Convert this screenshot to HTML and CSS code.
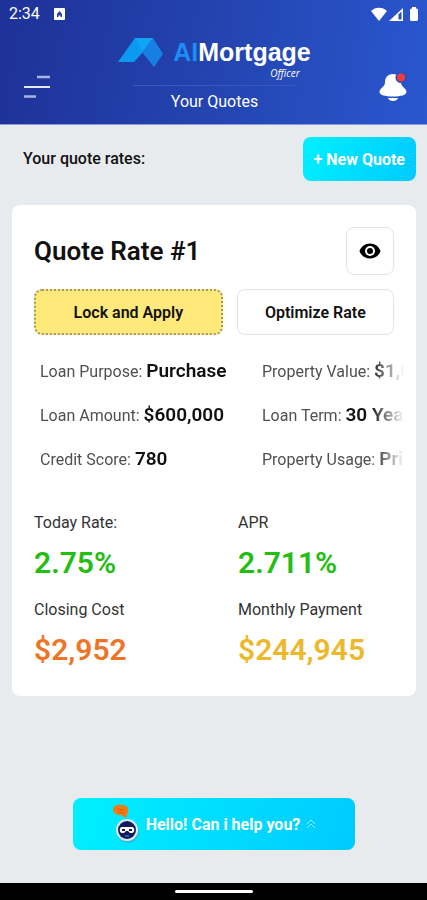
FILE: index.html
```html
<!DOCTYPE html>
<html lang="en">
<head>
    <meta charset="UTF-8">
    <meta name="viewport" content="width=device-width, initial-scale=1">
    <title>AIMortgage Officer - Your Quotes</title>
    <link rel="stylesheet" href="styles.css">
</head>
<body>

    <header class="header">
        <div class="status-bar">
            <span>2:34</span>
            <svg class="status-app" width="11" height="12" viewBox="0 0 11 12">
                <rect width="11" height="12" rx="1" fill="#fff"/>
                <path d="M3 9V6l2.500-3L8 6v3H6.500V7.500h-2V9z" fill="#2d3f9c"/>
            </svg>
            <svg class="status-icons" width="49" height="15" viewBox="0 0 49 15">
                <path d="M0 4C4-.5 12-.5 16 4L8 14z" fill="#fff"/>
                <path d="M18 14L32 1v13z" fill="#fff"/>
                <path d="M27.500 7.500L30.500 4.500v8h-3z" fill="#2b50bd"/>
                <path d="M41 1.500h4V0h-4zM39 3q0-1.500 1.500-1.500h5q1.500 0 1.500 1.500v9.500q0 1.500-1.500 1.500h-5q-1.500 0-1.500-1.500z" fill="#fff"/>
            </svg>
        </div>
        <div class="header-main">
            <button class="icon-btn menu-btn" type="button" aria-label="Menu">
                <svg width="26" height="24" viewBox="0 0 26 24">
                    <path d="M13 2h13" stroke="#a9b4e2" stroke-width="2.500"/>
                    <path d="M0 12h26" stroke="#e4e9fa" stroke-width="2"/>
                    <path d="M0 21.500h12" stroke="#a9b4e2" stroke-width="2.500"/>
                </svg>
            </button>
            <div class="brand">
                <div class="logo">
                    <svg width="45" height="31" viewBox="0 0 45 31">
                        <path d="M17 1h18l-9 13-10 11H0z" fill="#0c9af0"/>
                        <path d="M17 1h18l-10 13z" fill="#12a4f4"/>
                        <path d="M35 1l10 16-9 13-12-15z" fill="#187fe2"/>
                    </svg>
                    <div class="logo-text">
                        <div class="logo-name"><span>AI</span>Mortgage</div>
                        <div class="logo-sub">Officer</div>
                    </div>
                </div>
                <h1>Your Quotes</h1>
            </div>
            <button class="icon-btn bell-btn" type="button" aria-label="Notifications">
                <svg width="28" height="28" viewBox="0 0 28 28">
                    <path d="M14 1C8.500 1 6 5 6 9.500 6 14 .5 15 .5 19c0 3 5.500 4.500 13.500 4.500S27.500 22 27.500 19c0-4-5.500-5-5.500-9.500C22 5 19.500 1 14 1z" fill="#fff"/>
                    <path d="M9 25h10c-1 4-9 4-10 0z" fill="#fff"/>
                    <circle cx="22" cy="4.500" r="5.500" fill="#2850c2"/>
                    <circle cx="22" cy="4.500" r="4" fill="#f23c3c"/>
                </svg>
            </button>
        </div>
    </header>

    <main class="content">
        <div class="toolbar">
            <h2>Your quote rates:</h2>
            <button class="btn new-btn" type="button">+ New Quote</button>
        </div>

        <section class="card">
            <div class="card-head">
                <h3>Quote Rate #1</h3>
                <button class="btn view-btn" type="button" aria-label="View quote">
                    <svg width="22" height="16" viewBox="0 0 22 16">
                        <path d="M11 .5C6 .5 2 3.500 .5 8 2 12.500 6 15.500 11 15.500S20 12.500 21.500 8C20 3.500 16 .5 11 .5z"/>
                        <circle cx="11" cy="8" r="5" fill="#fff"/>
                        <circle cx="11" cy="8" r="3"/>
                    </svg>
                </button>
            </div>

            <div class="actions">
                <button class="btn lock-btn" type="button">Lock and Apply</button>
                <button class="btn optimize-btn" type="button">Optimize Rate</button>
            </div>

            <div class="details">
                <p>Loan Purpose: <b>Purchase</b></p>
                <p>Property Value: <b>$1,000,000</b></p>
                <p>Loan Amount: <b>$600,000</b></p>
                <p>Loan Term: <b>30 Years</b></p>
                <p>Credit Score: <b>780</b></p>
                <p>Property Usage: <b>Primary</b></p>
            </div>

            <dl class="rates">
                <div>
                    <dt>Today Rate:</dt>
                    <dd class="green">2.75%</dd>
                </div>
                <div>
                    <dt>APR</dt>
                    <dd class="green">2.711%</dd>
                </div>
                <div>
                    <dt>Closing Cost</dt>
                    <dd class="orange">$2,952</dd>
                </div>
                <div>
                    <dt>Monthly Payment</dt>
                    <dd class="yellow">$244,945</dd>
                </div>
            </dl>
        </section>

        <button class="btn chat-btn" type="button">
            <svg width="28" height="40" viewBox="0 0 28 40">
                <path d="M1 5C2 1 6 0 10 1c5 0 7 3 6 7l-2 6-5-3C4 11 1 9 1 5z" fill="#f47a12"/>
                <path d="M5 5l7 1M6 8l6 1" stroke="#d95c08"/>
                <circle cx="16" cy="28" r="11" fill="#38aacb" opacity=".6"/>
                <circle cx="15" cy="26" r="11" fill="#dce8f5"/>
                <circle cx="15" cy="26" r="9" fill="#141b5c"/>
                <path d="M10 23h10c3 0 3 6 0 6h-2l-2-2h-2l-2 2h-2c-3 0-3-6 0-6z" fill="#fff"/>
                <path d="M10 25h3v2h-3zM17 25h3v2h-3z" fill="#141b5c"/>
                <path d="M13 32h4" stroke="#2aa8e0"/>
            </svg>
            <span>Hello! Can i help you?</span>
            <svg width="10" height="10" viewBox="0 0 10 10" fill="none" stroke="#9beaff">
                <path d="M1 5l4-4 4 4M1 9l4-4 4 4"/>
            </svg>
        </button>
    </main>

    <footer class="nav-bar">
        <div class="nav-handle"></div>
    </footer>

</body>
</html>
```
FILE: styles.css
```css
* {
    box-sizing: border-box;
}
body {
    font-family: Roboto, "Liberation Sans", sans-serif;
    font-size: 16px;
    line-height: 20px;
    color: #111;
    background-color: #e7ebee;
    margin: 0;
    display: flex;
    flex-direction: column;
    min-height: 100vh;
}
h1, h2, h3, p, dl, dd {
    margin: 0;
}
button {
    font-family: inherit;
    color: inherit;
    cursor: pointer;
}
svg {
    display: block;
    flex-shrink: 0;
}

/* Header */
.header {
    background: linear-gradient(100deg, #1e3198 0%, #2342ad 45%, #2a57cf 100%);
    border-bottom: 1px solid #8f9be0;
    color: #fff;
}
.status-bar {
    display: flex;
    align-items: center;
    height: 28px;
    padding: 0 7px 0 9px;
}
.status-app {
    margin-left: 14px;
}
.status-icons {
    margin-left: auto;
}
.header-main {
    display: flex;
    justify-content: space-between;
    padding: 9px 20px 12px 24px;
}
.icon-btn {
    background: none;
    border: none;
    padding: 0;
    align-self: flex-end;
}
.menu-btn {
    margin-bottom: 13px;
}
.bell-btn {
    margin-bottom: 11px;
}
.brand {
    display: flex;
    flex-direction: column;
    align-items: center;
}
.logo {
    display: flex;
    gap: 10px;
}
.logo-text {
    font-family: "Liberation Sans", Arial, sans-serif;
}
.logo-name {
    font-size: 25px;
    line-height: 30px;
    font-weight: bold;
}
.logo-name span {
    color: #1c8df5;
}
.logo-sub {
    font-family: "Open Sans", sans-serif;
    font-size: 10px;
    line-height: 12px;
    font-style: italic;
    text-align: right;
    padding-right: 11px;
}
.brand h1 {
    border-top: 1px solid #3a58bb;
    padding: 6px 38px 0;
    margin-top: 6px;
    font-size: 16px;
    font-weight: normal;
}

/* Page */
.content {
    flex-grow: 1;
    display: flex;
    flex-direction: column;
    padding: 12px 11px 33px 12px;
}
.toolbar {
    display: flex;
    justify-content: space-between;
    align-items: center;
    padding-left: 11px;
    margin-bottom: 24px;
}
.toolbar h2 {
    font-size: 16px;
    line-height: 22px;
    font-weight: 500;
}
.btn {
    border: none;
    border-radius: 8px;
    padding: 0;
    font-size: 16px;
    font-weight: 600;
    display: flex;
    align-items: center;
    justify-content: center;
}
.new-btn,
.chat-btn {
    background: linear-gradient(110deg, #00f0ff, #00caff);
    color: #fff;
    font-weight: bold;
}
.new-btn {
    height: 44px;
    padding: 0 11px;
}

/* Quote card */
.card {
    background: #fff;
    border-radius: 8px;
    padding: 22px 22px 26px;
    margin-bottom: 24px;
}
.card-head {
    display: flex;
    justify-content: space-between;
    align-items: center;
}
.card-head h3 {
    font-size: 26px;
    line-height: 32px;
    font-weight: 600;
}
.view-btn {
    width: 48px;
    height: 48px;
    background: #fff;
    border: 1px solid #e2e4e6;
}
.actions {
    display: flex;
    gap: 14px;
    margin: 14px 0;
}
.actions .btn {
    height: 46px;
}
.lock-btn {
    flex: 188;
    background: #ffe97a;
    border: 2px dotted #a39b68;
}
.optimize-btn {
    flex: 158;
    background: #fff;
    border: 1px solid #e2e4e6;
}
.details {
    display: grid;
    grid-template-columns: 222px 1fr;
    grid-auto-rows: 44px;
    align-items: center;
    margin-right: -10px;
    padding-left: 6px;
    overflow: hidden;
    white-space: nowrap;
    -webkit-mask-image: linear-gradient(to left, transparent, #000 34px);
    mask-image: linear-gradient(to left, transparent, #000 34px);
}
.details p {
    min-width: 0;
    color: #505050;
}
.details b {
    font-size: 19px;
    font-weight: 600;
    color: #111;
}
.rates {
    display: grid;
    grid-template-columns: 204px 1fr;
    row-gap: 17px;
    margin-top: 32px;
}
.rates dt {
    color: #333;
    margin-bottom: 10px;
}
.rates dd {
    font-size: 30px;
    line-height: 40px;
    font-weight: 600;
}
.green {
    color: #23bd13;
}
.orange {
    color: #ee7528;
}
.yellow {
    color: #edb82c;
}

/* Chat button */
.chat-btn {
    align-self: center;
    width: 70%;
    height: 52px;
    margin-top: auto;
    gap: 6px;
}

/* System bar */
.nav-bar {
    background: #000;
    height: 17px;
    display: flex;
    justify-content: center;
    align-items: center;
}
.nav-handle {
    width: 78px;
    height: 3px;
    border-radius: 2px;
    background: #fff;
}
```
